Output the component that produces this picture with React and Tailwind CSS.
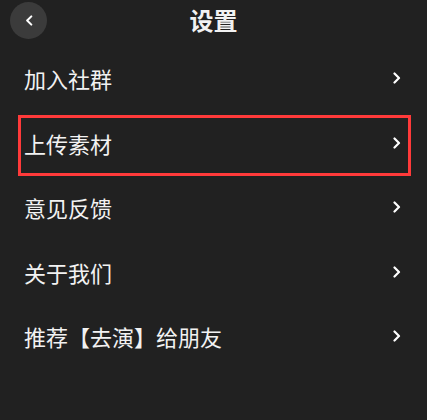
import React from "react";

const items = ["加入社群", "上传素材", "意见反馈", "关于我们", "推荐【去演】给朋友"];

function Chevron({ className }) {
  return (
    <svg viewBox="0 0 8 12" className={className} fill="none">
      <path d="M1.5 1.5 L6 6 L1.5 10.5" stroke="currentColor" strokeWidth="2.2" strokeLinecap="round" strokeLinejoin="round" />
    </svg>
  );
}

export default function App() {
  return (
    <div
      className="w-[427px] h-[420px] bg-[#212121] text-[#f2f2f2] overflow-hidden"
      style={{ fontFamily: '"Noto Sans CJK SC", "Noto Sans", sans-serif' }}
    >
      {/* Header */}
      <div className="relative h-10 flex items-center justify-center">
        <button className="absolute left-[10px] top-[2px] w-[37px] h-[37px] rounded-full bg-[#3b3b3b] flex items-center justify-center">
          <Chevron className="w-[8px] h-[11px] rotate-180 text-white" />
        </button>
        <h1 className="text-[24px] font-bold leading-none">设置</h1>
      </div>

      {/* List */}
      <div className="pt-[6px]">
        {items.map((item, index) => (
          <div key={index} className="relative h-[64.5px] flex items-center justify-between pl-6 pr-[26px]">
            <span className="text-[22px] leading-none">{item}</span>
            <Chevron className="w-[8px] h-[12px] text-white" />
            {index === 1 && (
              <div className="absolute left-[18px] right-[16px] top-[4px] bottom-[-1px] border-[3px] border-[#ff3a3a] pointer-events-none" />
            )}
          </div>
        ))}
      </div>
    </div>
  );
}
